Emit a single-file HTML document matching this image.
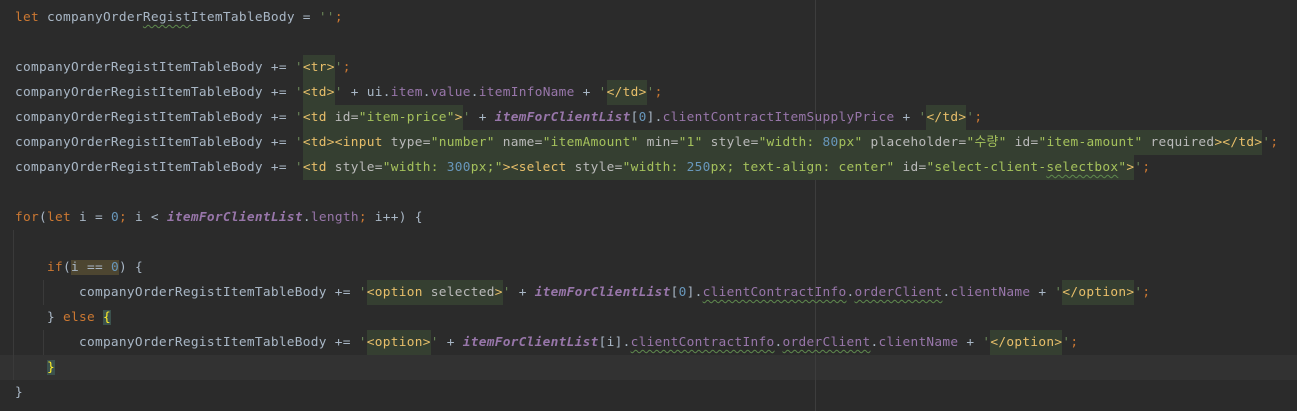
<!DOCTYPE html>
<html><head><meta charset="utf-8"><style>
body{margin:0;background:#2b2b2b;width:1297px;height:411px;overflow:hidden;position:relative}
.code{position:absolute;left:15px;top:5px;font-family:"DejaVu Sans Mono","Noto Sans CJK KR",monospace;font-size:12.8px;letter-spacing:0.29px;color:#a9b7c6}
.l{height:25px;line-height:25px;white-space:pre}
.k{color:#cc7832}.s{color:#6a8759}.t{color:#e8bf6a}.a{color:#bababa}.v{color:#a5c25c}.n{color:#6897bb}
.p{color:#9876aa}.si{color:#9876aa;font-style:italic;font-weight:bold}
.g{background:#353f31;display:inline-block;height:25px}
.w{text-decoration:underline wavy #5f8a4e;text-underline-offset:3px;text-decoration-thickness:1px}
.hl{background:#4d4631}.br{background:#3b514d;color:#ffef28}
.margin{position:absolute;left:815px;top:0;width:1px;height:411px;background:#3d3d3d}
.cur{position:absolute;left:0;top:355px;width:1297px;height:25px;background:#323232}
.guide{position:absolute;width:1px;background:#3a3a3a}
</style></head><body>
<div class="cur"></div>
<div class="margin"></div>
<div class="guide" style="left:13px;top:230px;height:150px"></div>
<div class="guide" style="left:43px;top:280px;height:25px"></div>
<div class="guide" style="left:43px;top:330px;height:25px"></div>
<div class="code"><div class="l"><span class="k">let</span> companyOrder<span class="w">Regist</span>ItemTableBody = <span class="s">''</span><span class="k">;</span></div><div class="l"> </div><div class="l">companyOrderRegistItemTableBody += <span class="s">'</span><span class="g"><span class="t">&lt;tr&gt;</span></span><span class="s">'</span><span class="k">;</span></div><div class="l">companyOrderRegistItemTableBody += <span class="s">'</span><span class="g"><span class="t">&lt;td&gt;</span></span><span class="s">'</span> + ui.<span class="p">item</span>.<span class="p">value</span>.<span class="p">itemInfoName</span> + <span class="s">'</span><span class="g"><span class="t">&lt;/td&gt;</span></span><span class="s">'</span><span class="k">;</span></div><div class="l">companyOrderRegistItemTableBody += <span class="s">'</span><span class="g"><span class="t">&lt;td </span><span class="a">id=</span><span class="v">"item-price"</span><span class="t">&gt;</span></span><span class="s">'</span> + <span class="si">itemForClientList</span>[<span class="n">0</span>].<span class="p">clientContractItemSupplyPrice</span> + <span class="s">'</span><span class="g"><span class="t">&lt;/td&gt;</span></span><span class="s">'</span><span class="k">;</span></div><div class="l">companyOrderRegistItemTableBody += <span class="s">'</span><span class="g"><span class="t">&lt;td&gt;&lt;input </span><span class="a">type=</span><span class="v">"number" </span><span class="a">name=</span><span class="v">"itemAmount" </span><span class="a">min=</span><span class="v">"1" </span><span class="a">style=</span><span class="v">"width: </span><span class="n">80</span><span class="v">px" </span><span class="a">placeholder=</span><span class="v">"수량" </span><span class="a">id=</span><span class="v">"item-amount" </span><span class="a">required</span><span class="t">&gt;&lt;/td&gt;</span></span><span class="s">'</span><span class="k">;</span></div><div class="l">companyOrderRegistItemTableBody += <span class="s">'</span><span class="g"><span class="t">&lt;td </span><span class="a">style=</span><span class="v">"width: </span><span class="n">300</span><span class="v">px;"</span><span class="t">&gt;&lt;select </span><span class="a">style=</span><span class="v">"width: </span><span class="n">250</span><span class="v">px; text-align: center" </span><span class="a">id=</span><span class="v">"select-client-<span class="w">selectbox</span>"</span><span class="t">&gt;</span></span><span class="s">'</span><span class="k">;</span></div><div class="l"> </div><div class="l"><span class="k">for</span>(<span class="k">let</span> i = <span class="n">0</span><span class="k">;</span> i &lt; <span class="si">itemForClientList</span>.<span class="p">length</span><span class="k">;</span> i++) {</div><div class="l"> </div><div class="l">    <span class="k">if</span>(<span class="hl">i == <span class="n">0</span></span>) {</div><div class="l">        companyOrderRegistItemTableBody += <span class="s">'</span><span class="g"><span class="t">&lt;option </span><span class="a">selected</span><span class="t">&gt;</span></span><span class="s">'</span> + <span class="si">itemForClientList</span>[<span class="n">0</span>].<span class="p w">clientContractInfo</span>.<span class="p w">orderClient</span>.<span class="p">clientName</span> + <span class="s">'</span><span class="g"><span class="t">&lt;/option&gt;</span></span><span class="s">'</span><span class="k">;</span></div><div class="l">    } <span class="k">else</span> <span class="br">{</span></div><div class="l">        companyOrderRegistItemTableBody += <span class="s">'</span><span class="g"><span class="t">&lt;option&gt;</span></span><span class="s">'</span> + <span class="si">itemForClientList</span>[i].<span class="p w">clientContractInfo</span>.<span class="p w">orderClient</span>.<span class="p">clientName</span> + <span class="s">'</span><span class="g"><span class="t">&lt;/option&gt;</span></span><span class="s">'</span><span class="k">;</span></div><div class="l">    <span class="br">}</span></div><div class="l">}</div></div>
</body></html>
